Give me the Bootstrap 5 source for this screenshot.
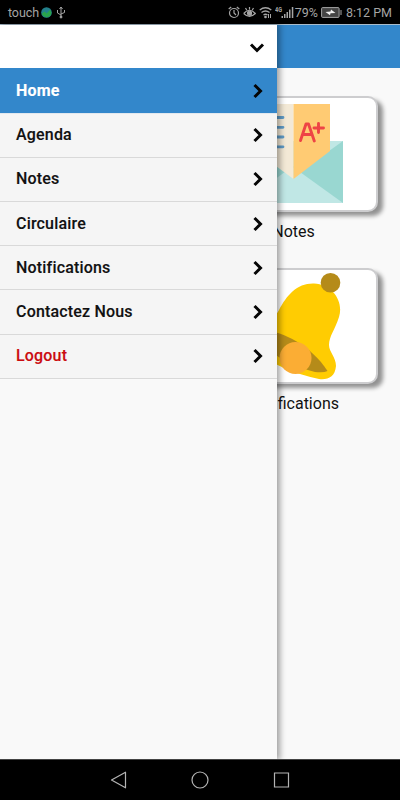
<!DOCTYPE html>
<html lang="fr">
<head>
<meta charset="utf-8">
<meta name="viewport" content="width=device-width, initial-scale=1">
<title>Menu</title>
<link href="https://cdn.jsdelivr.net/npm/bootstrap@5.3.0/dist/css/bootstrap.min.css" rel="stylesheet">
<style>
body{font-family:Roboto,sans-serif;background:#f9f9f9;height:800px;overflow:hidden}
svg{display:block;flex:none}
.status{height:24px;background:#000;color:#a5a5a5;font-size:12.5px;line-height:24px;padding:1px 8px 0}
.status .carrier{width:31px;letter-spacing:-.1px}
.status .percent{margin-left:1px}
.screen{height:735px}
.topbar{height:44px;background:#3387cb;border-top:1px solid #a9bccb}
.tiles{padding:28px 22px 0 0}
.tile{width:169px;margin-bottom:25px}
.pic{height:116px;border:2px solid #cdcdcf;border-radius:10px;background:#fff;box-shadow:5px 4px 4px #929292;overflow:hidden}
.caption{font-size:16px;line-height:24px;margin-top:8px;margin-bottom:-1px;color:#111}
.drawer{width:277px;background:#f9f9f9;box-shadow:2px 0 6px 1px rgba(0,0,0,.36);top:1px;bottom:0;left:0}
.drawer-head{height:43px;background:#fff;padding-right:12px}
.menu-item{height:44.2px;padding:0 12px 0 16px;font-size:16px;font-weight:500;letter-spacing:.18px;color:#111;background:#f5f5f5;border-bottom:1px solid #d9d9d9;-webkit-text-stroke:.12px}
.menu-item.current{height:45.6px;padding-top:2px;background:#3387cb;color:#fff;font-weight:700;border-color:#e2e8ee}
.menu-item.leave{color:#cb0c10}
.arrow{fill:none;stroke:#050505;stroke-width:3}
.softkeys{height:41px;background:#000;box-shadow:inset 0 1px #444;padding:0 109px 0 109px}
.softkeys svg{fill:none;stroke:#b4b4b4;stroke-width:1.2}
.operator-dot{margin-left:2px}
.usb{margin-left:4px}
.gap-s{margin-left:3px}
.battery{margin:0 4px 0 3px}
</style>
</head>
<body class="d-flex flex-column">
<header class="status d-flex align-items-center flex-shrink-0">
  <span class="carrier">touch</span>
  <svg class="operator-dot" width="11" height="11" viewBox="0 0 12 12"><circle cx="6" cy="6" r="5.8" fill="#22808b"/><path d="M1 7l3-2 2 2 4-4 1.300 3a5 5 0 0 1-4 5Q3 12 1 8Z" fill="#29a34b"/></svg>
  <svg class="usb" width="10" height="13" viewBox="0 0 10 13" fill="none" stroke="#a5a5a5"><path d="M5 1v10M1.500 4v3L5 9M8.500 4v2.500L5 8M3.500 3L5 1l1.500 2"/><circle cx="5" cy="11" r="1" fill="#a5a5a5"/></svg>
  <svg class="ms-auto" width="12" height="13" viewBox="0 0 12 13" fill="none" stroke="#a5a5a5" stroke-width="1.2"><circle cx="6" cy="7" r="4.500"/><path d="M6 4v3l2 2M.7 3l2.500-2M11.300 3L8.800 1"/></svg>
  <svg class="gap-s" width="13" height="13" viewBox="0 0 13 13" fill="none" stroke="#a5a5a5" stroke-width="1.200"><path d="M.7 7.500Q6.500 1 12.300 7.500 6.500 13 .7 7.500M6.500 1v2.500M2.500 2l1.200 2M10.500 2L9.300 4"/><circle cx="6.500" cy="7.200" r="2" fill="#a5a5a5"/></svg>
  <svg class="gap-s" width="13" height="13" viewBox="0 0 13 13" fill="none" stroke="#a5a5a5" stroke-width="1.300"><path d="M.7 4Q6.500-.5 12.300 4M2.500 6.500q4-3 8 0M4.500 9q2-1.500 4 0"/><circle cx="6.500" cy="11" r=".7"/><path d="M9.500 8v4M11.500 8v4" stroke-width="1"/></svg>
  <svg class="gap-s" width="19" height="13" viewBox="0 0 19 13" fill="#a5a5a5"><text x="0" y="5.500" font-size="6.500" font-weight="700" textLength="7" lengthAdjust="spacingAndGlyphs">4G</text><path d="M6.500 10h1.500v2H6.500zM9 8h1.500v4H9zM11.500 6H13v6h-1.500zM14 3.500h1.500V12H14zM16.800 1h1.500v11h-1.500z"/></svg>
  <span class="percent">79%</span>
  <svg class="battery" width="21" height="11" viewBox="0 0 21 11"><rect x=".6" y=".6" width="17.500" height="9.800" rx="1" fill="#444" stroke="#a5a5a5"/><path d="M20 3v5" stroke="#a5a5a5"/><path d="M4.500 5l5-.5.5-2 4.500 3.500-5 .3-.5 2Z" fill="#eee"/></svg>
  <span>8:12 PM</span>
</header>

<main class="screen position-relative flex-shrink-0 overflow-hidden">
  <div class="topbar"></div>
  <section class="tiles d-flex flex-column align-items-end">
    <div class="tile">
      <div class="pic"><svg width="168" height="116" viewBox="211 98 168 116">
        <path d="M243 141h100v62H243z" fill="#c0e7e5"/>
        <path d="M243 141v62l50-37Z" fill="#99d7d1"/><path d="M343 141v62l-50-36 36-26Z" fill="#99d7d1"/><path d="M329 141h14l-14 10Z" fill="#c0e7e5"/>
        <path d="M257 104h36.500v75L257 152Z" fill="#f3e9d6"/><path d="M293.500 104H330v47l-36.500 28Z" fill="#ffcb73"/>
        <path d="M267 117.500h16M267 127.300h16M267 137h16M267 146.800h16" stroke="#5f9bc7" stroke-width="2.800" stroke-linecap="round"/>
        <path d="M300.500 140.500L306 124h2.500l5.800 17M302.500 134.500h9M314 128h9.500M318.500 123.500v9" fill="none" stroke="#ee4445" stroke-width="2.900" stroke-linecap="round" stroke-linejoin="round"/>
      </svg></div>
      <div class="caption text-center">Notes</div>
    </div>
    <div class="tile">
      <div class="pic"><svg width="168" height="116" viewBox="211 270 168 116">
        <path d="M279 310C287 295 297 283 314 283.500C332 284 344 301 339 317C335 330 329 336 329 345C329 352 336 357 336 366C335 377 328 380 319 379Q280 371 252 349C242 338 251 328 263 326C271 324 274 318 279 310Z" fill="#ffcc02"/>
        <path d="M257 332C272 326 309 342 327.500 371Q324 373 315 372Q270 361 257 332Z" fill="#b58b19"/>
        <circle cx="295.500" cy="358" r="16" fill="#fbad34"/><circle cx="330.500" cy="282.700" r="9.800" fill="#b58b19"/>
      </svg></div>
      <div class="caption text-center">Notifications</div>
    </div>
  </section>

  <nav class="drawer position-absolute">
    <div class="drawer-head d-flex align-items-center justify-content-end"><svg class="arrow" width="16" height="16" viewBox="0 0 16 16"><path d="M2 5.500l6 6 6-6"/></svg></div>
    <a class="menu-item current d-flex align-items-center justify-content-between text-decoration-none" href="#">Home<svg class="arrow" width="16" height="16" viewBox="0 0 16 16"><path d="M5.500 2l6 6-6 6"/></svg></a>
    <a class="menu-item d-flex align-items-center justify-content-between text-decoration-none" href="#">Agenda<svg class="arrow" width="16" height="16" viewBox="0 0 16 16"><path d="M5.500 2l6 6-6 6"/></svg></a>
    <a class="menu-item d-flex align-items-center justify-content-between text-decoration-none" href="#">Notes<svg class="arrow" width="16" height="16" viewBox="0 0 16 16"><path d="M5.500 2l6 6-6 6"/></svg></a>
    <a class="menu-item d-flex align-items-center justify-content-between text-decoration-none" href="#">Circulaire<svg class="arrow" width="16" height="16" viewBox="0 0 16 16"><path d="M5.500 2l6 6-6 6"/></svg></a>
    <a class="menu-item d-flex align-items-center justify-content-between text-decoration-none" href="#">Notifications<svg class="arrow" width="16" height="16" viewBox="0 0 16 16"><path d="M5.500 2l6 6-6 6"/></svg></a>
    <a class="menu-item d-flex align-items-center justify-content-between text-decoration-none" href="#">Contactez Nous<svg class="arrow" width="16" height="16" viewBox="0 0 16 16"><path d="M5.500 2l6 6-6 6"/></svg></a>
    <a class="menu-item leave d-flex align-items-center justify-content-between text-decoration-none" href="#">Logout<svg class="arrow" width="16" height="16" viewBox="0 0 16 16"><path d="M5.500 2l6 6-6 6"/></svg></a>
  </nav>
</main>

<footer class="softkeys d-flex align-items-center justify-content-between flex-shrink-0">
  <svg width="18" height="18" viewBox="0 0 18 18"><path d="M2.500 9L16.500 1.200v15.600Z" stroke-linejoin="round"/></svg>
  <svg width="18" height="18" viewBox="0 0 18 18"><circle cx="9" cy="9" r="8"/></svg>
  <svg width="18" height="18" viewBox="0 0 18 18"><path d="M1.500 2h14v14h-14z"/></svg>
</footer>
<script src="https://cdn.jsdelivr.net/npm/bootstrap@5.3.0/dist/js/bootstrap.bundle.min.js"></script>
</body>
</html>
